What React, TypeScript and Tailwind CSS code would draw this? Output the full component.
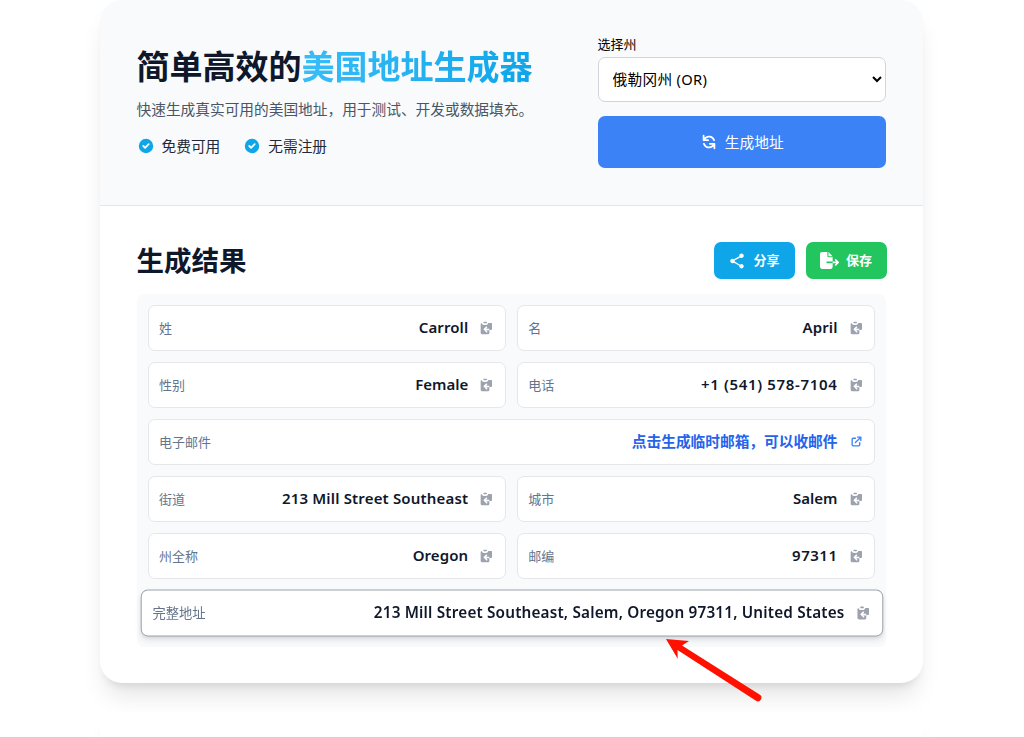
import React from "react";
import { FaFileExport } from "react-icons/fa6";

type Field = {
    label: string;
    value: string;
    textClass: string;
    wide?: boolean;
    link?: boolean;
    active?: boolean;
};

const fields: Field[] = [
    { label: "姓", value: "Carroll", textClass: "tracking-[0.1px]" },
    { label: "名", value: "April", textClass: "tracking-[0.1px]" },
    { label: "性别", value: "Female", textClass: "" },
    { label: "电话", value: "+1 (541) 578-7104", textClass: "tracking-[0.66px]" },
    { label: "电子邮件", value: "点击生成临时邮箱，可以收邮件", textClass: "", wide: true, link: true },
    { label: "街道", value: "213 Mill Street Southeast", textClass: "tracking-[0.17px]" },
    { label: "城市", value: "Salem", textClass: "" },
    { label: "州全称", value: "Oregon", textClass: "tracking-[0.1px]" },
    { label: "邮编", value: "97311", textClass: "tracking-[0.5px]" },
    { label: "完整地址", value: "213 Mill Street Southeast, Salem, Oregon 97311, United States", textClass: "tracking-[0.17px]", wide: true, active: true },
];

const CheckIcon = () => (
    <svg viewBox="0 0 20 20" fill="currentColor" className="h-[18px] w-[18px] text-[#0ea5e9]">
        <path fillRule="evenodd" clipRule="evenodd" d="M10 18a8 8 0 100-16 8 8 0 000 16zm3.707-9.293a1 1 0 00-1.414-1.414L9 10.586 7.707 9.293a1 1 0 00-1.414 1.414l2 2a1 1 0 001.414 0l4-4z" />
    </svg>
);

const RefreshIcon = () => (
    <svg viewBox="0 0 20 20" fill="currentColor" className="h-[18px] w-[18px]">
        <path fillRule="evenodd" clipRule="evenodd" d="M4 2a1 1 0 011 1v2.101a7.002 7.002 0 0111.601 2.566 1 1 0 11-1.885.666A5.002 5.002 0 005.999 7H9a1 1 0 010 2H4a1 1 0 01-1-1V3a1 1 0 011-1zm.008 9.057a1 1 0 011.276.61A5.002 5.002 0 0014.001 13H11a1 1 0 110-2h5a1 1 0 011 1v5a1 1 0 11-2 0v-2.101a7.002 7.002 0 01-11.601-2.566 1 1 0 01.61-1.276z" />
    </svg>
);

const ShareIcon = () => (
    <svg viewBox="0 0 24 24" fill="currentColor" className="h-[18px] w-[18px]">
        <path d="M18 16.08c-.76 0-1.44.3-1.96.77L8.91 12.7c.05-.23.09-.46.09-.7s-.04-.47-.09-.7l7.05-4.11c.54.5 1.25.81 2.04.81 1.66 0 3-1.34 3-3s-1.34-3-3-3-3 1.34-3 3c0 .24.04.47.09.7L8.04 9.81C7.5 9.31 6.79 9 6 9c-1.66 0-3 1.34-3 3s1.34 3 3 3c.79 0 1.5-.31 2.04-.81l7.12 4.16c-.05.21-.08.43-.08.65 0 1.61 1.31 2.92 2.92 2.92s2.92-1.31 2.92-2.92-1.31-2.92-2.92-2.92z" />
    </svg>
);

const CopyIcon = () => (
    <svg viewBox="0 0 45 45" fill="currentColor" className="h-[15px] w-[15px] text-[#9ca3af]">
        <rect x="13" y="2" width="11" height="5" rx="2.5" />
        <path d="M8 6C9 10 12 12 15 12H21C24 12 27 10 28 6H37A2 2 0 0 1 39 8V24A3 3 0 0 1 36 27H31V36A4 4 0 0 1 27 40H10A5 5 0 0 1 5 35V10A4 4 0 0 1 8 6Z" />
        <path fill="#fff" d="M13 25 22 16 25 19 22 23H31V28H22L26 33 23 35Z" />
    </svg>
);

const ExternalIcon = () => (
    <svg viewBox="0 0 24 24" fill="none" stroke="currentColor" strokeWidth={2.5} className="mx-px h-[13px] w-[13px] text-[#3b82f6]">
        <path strokeLinecap="round" strokeLinejoin="round" d="M10 6H6a2 2 0 00-2 2v10a2 2 0 002 2h10a2 2 0 002-2v-4M14 4h6m0 0v6m0-6L10 14" />
    </svg>
);

const FieldCard = ({ field }: { field: Field }) => (
    <div
        className={`flex h-[46px] items-center justify-between rounded-[7px] border bg-white px-[10.5px] ${field.wide ? "col-span-2" : ""} ${field.active ? "scale-[1.02] border-[#9ca3af] shadow-md" : "border-[#e5e7eb]"}`}
    >
        <span className="pt-[2px] text-[13px] text-[#64748b]">{field.label}</span>
        <div className="flex items-center gap-[11px]">
            <span className={`whitespace-nowrap ${field.active ? "pb-px" : "pb-[2px]"} ${field.link ? "text-[14.7px] font-bold text-[#2563eb]" : "text-[15px] font-semibold text-[#0f172a]"} ${field.textClass}`}>
                {field.value}
            </span>
            {field.link ? <ExternalIcon /> : <CopyIcon />}
        </div>
    </div>
);

const App = () => {
    return (
        <div className="relative h-[737px] overflow-hidden bg-white font-['Noto_Sans','Noto_Sans_CJK_SC',sans-serif]">
            <main className="ml-[99.5px] w-[823.5px]">
                <section className="h-[683px] overflow-hidden rounded-[22px] bg-white shadow-[0_18px_23px_-5px_rgba(0,0,0,0.1),0_7px_9px_-5px_rgba(0,0,0,0.1)]">
                    <header className="flex h-[206px] justify-between border-b border-[#e5e7eb] bg-[#f8fafc] px-[37px]">
                        <div className="pt-[44px]">
                            <h1 className="text-[33px] leading-[46px] font-bold text-[#0f172a]">
                                简单高效的
                                <span className="bg-linear-to-r/srgb from-[#38bdf8] to-[#0ea5e9] bg-clip-text text-transparent">美国地址生成器</span>
                            </h1>
                            <p className="mt-[6px] text-[14.7px] leading-[26px] text-[#4b5563]">快速生成真实可用的美国地址，用于测试、开发或数据填充。</p>
                            <div className="mt-[13px] flex gap-[23px] text-[14.7px] leading-[22px] text-[#1f2937]">
                                <span className="flex items-center gap-[7px]"><CheckIcon />免费可用</span>
                                <span className="flex items-center gap-[7px]"><CheckIcon />无需注册</span>
                            </div>
                        </div>
                        <div className="w-[288.5px] pt-[35px]">
                            <label className="block text-[13px] leading-[18px] text-black">选择州</label>
                            <select className="mt-[4px] block h-[45px] w-full rounded-[7px] border border-[#d1d5db] bg-white px-[10px] pb-px text-[14.7px] tracking-[0.3px] text-black">
                                <option>俄勒冈州 (OR)</option>
                            </select>
                            <button type="button" className="mt-[14px] flex h-[52px] w-full items-center justify-center gap-[7px] rounded-[7px] bg-[#3b82f6] text-[14.7px] text-white">
                                <RefreshIcon />
                                生成地址
                            </button>
                        </div>
                    </header>
                    <div className="px-[37px] pt-[36px]">
                        <div className="flex h-[37px] items-center justify-between">
                            <h2 className="text-[27.5px] leading-[37px] font-bold text-[#0f172a]">生成结果</h2>
                            <div className="-mr-[0.5px] flex gap-[11px] text-[13px] font-bold text-white">
                                <button type="button" className="flex h-[37px] w-[81px] items-center justify-center gap-[7px] rounded-[7px] bg-[#0ea5e9]">
                                    <ShareIcon />
                                    分享
                                </button>
                                <button type="button" className="flex h-[37px] w-[81px] items-center justify-center gap-[7px] rounded-[7px] bg-[#22c55e]">
                                    <FaFileExport className="h-[17px] w-[19px]" />
                                    保存
                                </button>
                            </div>
                        </div>
                        <div className="mt-[15px] grid grid-cols-2 gap-[11px] rounded-[7px] bg-[#f8fafc] p-[11px]">
                            {fields.map((field) => (
                                <FieldCard key={field.label} field={field} />
                            ))}
                        </div>
                    </div>
                </section>
                <section className="mt-[29px] h-[200px] rounded-[22px] bg-white shadow-[0_18px_23px_-5px_rgba(0,0,0,0.1),0_7px_9px_-5px_rgba(0,0,0,0.1)]" />
            </main>
            {/* pointer to the full address row */}
            <svg viewBox="0 0 100 66" className="absolute left-[664px] top-[637px] h-[66px] w-[100px]" fill="#ff1000">
                <path d="M2 2 25 4 18 8.5 95.5 57.5A3.4 3.4 0 0 1 92 63.8L13.5 13 13.7 21.7Z" />
            </svg>
        </div>
    );
};

export default App;
